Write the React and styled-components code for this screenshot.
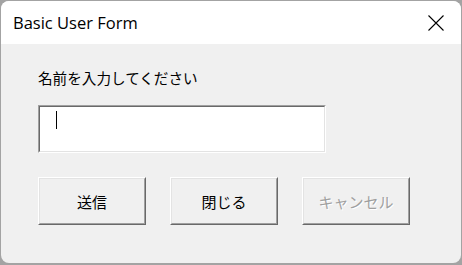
import React from "react";
import styled, { createGlobalStyle } from "styled-components";

const GlobalStyle = createGlobalStyle`
  html, body {
    margin: 0;
    padding: 0;
    background: #a3a3a3;
    width: 462px;
    height: 265px;
    overflow: hidden;
  }
  body {
    font-family: "Noto Sans", "Noto Sans CJK JP", sans-serif;
  }
`;

const Desk = styled.div`
  width: 462px;
  height: 265px;
  padding: 1px 1px 2px 1px;
  box-sizing: border-box;
  display: flex;
`;

const Window = styled.div`
  flex: 1;
  display: flex;
  flex-direction: column;
  background: #f0f0f0;
  border-radius: 8px;
  overflow: hidden;
`;

const TitleBar = styled.div`
  height: 43px;
  background: #ffffff;
  display: flex;
  align-items: center;
  justify-content: space-between;
  padding: 0 17px 0 12px;
  flex-shrink: 0;
`;

const Title = styled.span`
  font-family: "Open Sans", "Noto Sans", sans-serif;
  font-size: 16.5px;
  color: #000;
`;

const Body = styled.div`
  display: flex;
  flex-direction: column;
  padding: 23px 0 0 37px;
`;

const Label = styled.div`
  font-family: "Noto Sans CJK JP", sans-serif;
  font-size: 14.6px;
  line-height: 22px;
  color: #000;
`;

const Field = styled.div`
  width: 288px;
  height: 48px;
  margin-top: 16px;
  box-sizing: border-box;
  background: #fff;
  border-top: 1px solid #a0a0a0;
  border-left: 1px solid #a0a0a0;
  border-right: 1px solid #ffffff;
  border-bottom: 1px solid #ffffff;
  display: flex;
`;

const FieldInner = styled.div`
  flex: 1;
  border-top: 1px solid #696969;
  border-left: 1px solid #696969;
  border-right: 1px solid #e3e3e3;
  border-bottom: 1px solid #e3e3e3;
  padding: 4px 0 0 16px;
`;

const Caret = styled.div`
  width: 1px;
  height: 18px;
  background: #000;
`;

const ButtonRow = styled.div`
  display: flex;
  gap: 24px;
  margin-top: 24px;
`;

const Button = styled.div`
  width: 108px;
  height: 48px;
  box-sizing: border-box;
  background: #f0f0f0;
  border-top: 1px solid #ffffff;
  border-left: 1px solid #ffffff;
  border-right: 1px solid #696969;
  border-bottom: 1px solid #696969;
  display: flex;
`;

const ButtonInner = styled.div`
  flex: 1;
  border-top: 1px solid #e3e3e3;
  border-left: 1px solid #e3e3e3;
  border-right: 1px solid #a0a0a0;
  border-bottom: 1px solid #a0a0a0;
  display: flex;
  align-items: center;
  justify-content: center;
  font-family: "Noto Sans CJK JP", sans-serif;
  font-size: 15px;
  color: ${(p) => (p.$disabled ? "#a0a0a0" : "#000")};
  text-shadow: ${(p) => (p.$disabled ? "1px 1px 0 #ffffff" : "none")};
`;

const CloseIcon = () => (
  <svg width="16" height="16" viewBox="0 0 16 16">
    <path d="M0.5 0.5 L15.5 15.5 M15.5 0.5 L0.5 15.5" stroke="#000" strokeWidth="1.1" fill="none" />
  </svg>
);

export default function App() {
  return (
    <Desk>
      <GlobalStyle />
      <Window>
        <TitleBar>
          <Title>Basic User Form</Title>
          <CloseIcon />
        </TitleBar>
        <Body>
          <Label>名前を入力してください</Label>
          <Field>
            <FieldInner>
              <Caret />
            </FieldInner>
          </Field>
          <ButtonRow>
            <Button>
              <ButtonInner>送信</ButtonInner>
            </Button>
            <Button>
              <ButtonInner>閉じる</ButtonInner>
            </Button>
            <Button>
              <ButtonInner $disabled>キャンセル</ButtonInner>
            </Button>
          </ButtonRow>
        </Body>
      </Window>
    </Desk>
  );
}
